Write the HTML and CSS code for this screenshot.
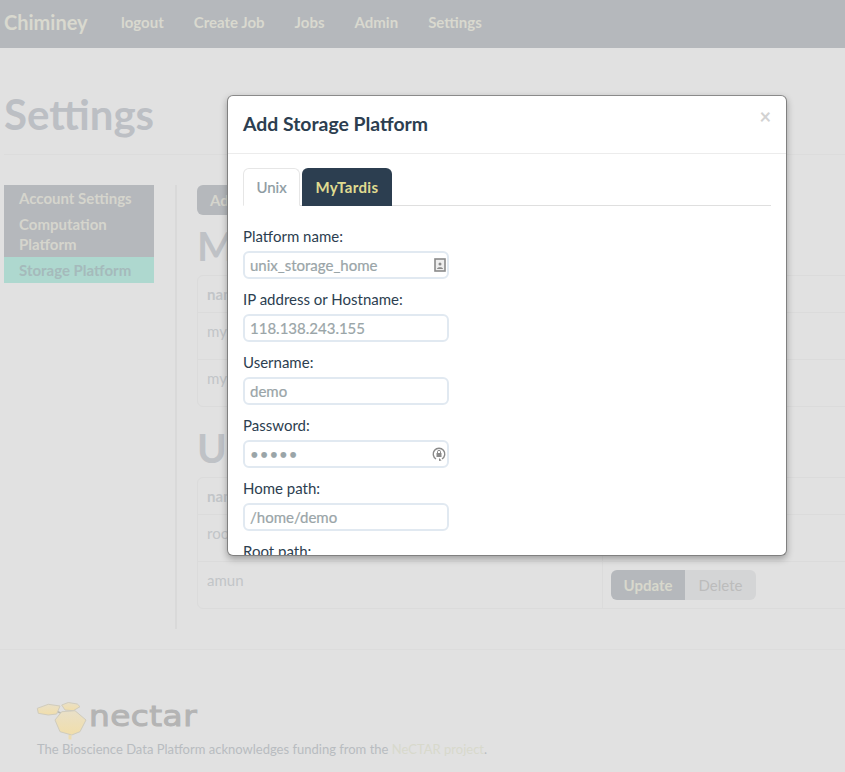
FILE: index.html
```html
<!DOCTYPE html>
<html lang="en">
<head>
    <meta charset="UTF-8">
    <title>Chiminey - Settings</title>
    <link rel="stylesheet" href="styles.css">
</head>
<body>
    <nav class="navbar">
        <a class="brand">Chiminey</a>
        <a class="nav-link">logout</a>
        <a class="nav-link">Create Job</a>
        <a class="nav-link">Jobs</a>
        <a class="nav-link">Admin</a>
        <a class="nav-link">Settings</a>
    </nav>

    <header class="page-header">
        <h1>Settings</h1>
    </header>

    <div class="main">
        <ul class="side-menu">
            <li>Account Settings</li>
            <li>Computation Platform</li>
            <li class="active">Storage Platform</li>
        </ul>

        <div class="content">
            <a class="btn-add">Add Storage Platform</a>

            <h2 class="first-heading">MyTardis</h2>
            <table class="platforms">
                <tr class="head-row"><th class="name-col">name</th><th></th></tr>
                <tr class="body-row"><td class="name-col">mytardis_home</td><td></td></tr>
                <tr class="body-row"><td class="name-col">mytardis_test</td><td></td></tr>
            </table>

            <h2 class="second-heading">Unix</h2>
            <table class="platforms">
                <tr class="head-row"><th class="name-col">name</th><th></th></tr>
                <tr class="body-row"><td class="name-col">root</td><td></td></tr>
                <tr class="body-row">
                    <td class="name-col">amun</td>
                    <td class="actions">
                        <div class="btn-group">
                            <a class="btn-update">Update</a>
                            <a class="btn-delete">Delete</a>
                        </div>
                    </td>
                </tr>
            </table>
        </div>
    </div>

    <footer class="footer">
        <div class="logo">
            <svg class="logo-mark" width="52" height="38" viewBox="0 0 52 38">
                <defs>
                    <linearGradient id="honey" x1="0" y1="0" x2="0" y2="1">
                        <stop offset="0" stop-color="#e9e0c8"/>
                        <stop offset="1" stop-color="#f1deaa"/>
                    </linearGradient>
                </defs>
                <path d="M20 9 L27 12 M35 7 L35 10" stroke="#b9b9b0" stroke-width="1.5"/>
                <path d="M1.3 6.3 L12.3 2.3 L24 4 L20.7 12 L12.3 13 L2.3 11.3 Z" fill="url(#honey)" stroke="#d0ccbd"/>
                <path d="M25.7 3 L32.3 0.5 L41.3 2 L44 4.7 L37.3 8.7 L29 8 Z" fill="url(#honey)" stroke="#d0ccbd"/>
                <path d="M19 18 L25.7 9.7 L39 8.7 L50 18 L44 29.7 L35.7 33 L24 29.7 Z" fill="url(#honey)" stroke="#d0ccbd"/>
                <path d="M34 33 L34 37.5" stroke="#ecdcb0" stroke-width="3"/>
            </svg>
            <span class="logo-word">nectar</span>
        </div>
        <p class="credit">The Bioscience Data Platform acknowledges funding from the <a>NeCTAR project</a>.</p>
    </footer>

    <div class="modal">
        <div class="modal-header">
            <h3>Add Storage Platform</h3>
            <span class="close">&times;</span>
        </div>
        <div class="modal-body">
            <ul class="tabs">
                <li class="tab-current">Unix</li>
                <li class="tab-other">MyTardis</li>
            </ul>

            <label>Platform name:</label>
            <div class="field">
                <span class="value">unix_storage_home</span>
                <svg class="field-icon" width="12" height="14" viewBox="0 0 12 14">
                    <rect x="1" y="1" width="10" height="12" fill="#eee" stroke="#8a8a8a" stroke-width="1.6"/>
                    <circle cx="6" cy="6" r="1.5" fill="#8a8a8a"/>
                    <path d="M3 11 C3 8.5 9 8.5 9 11 Z" fill="#8a8a8a"/>
                </svg>
            </div>

            <label>IP address or Hostname:</label>
            <div class="field"><span class="value">118.138.243.155</span></div>

            <label>Username:</label>
            <div class="field"><span class="value">demo</span></div>

            <label>Password:</label>
            <div class="field">
                <span class="value dots">&bull;&bull;&bull;&bull;&bull;</span>
                <svg class="field-icon" width="14" height="14" viewBox="0 0 14 14">
                    <path d="M4 12 A5.8 5.8 0 1 1 10 12" fill="none" stroke="#8a8a8a" stroke-width="1.4"/>
                    <path d="M7 11 L9.6 13.4 L7 14 Z" fill="#8a8a8a"/>
                    <rect x="4.5" y="6" width="5" height="4" fill="#8a8a8a"/>
                    <path d="M5.5 6 V4.8 A1.5 1.5 0 0 1 8.5 4.8 V6" fill="none" stroke="#8a8a8a"/>
                </svg>
            </div>

            <label>Home path:</label>
            <div class="field"><span class="value">/home/demo</span></div>

            <label>Root path:</label>
            <div class="field"><span class="value">/home/demo</span></div>
        </div>
    </div>
</body>
</html>
```

FILE: styles.css
```css
html, body {
    height: 772px;
    overflow: hidden;
}

body {
    margin: 0;
    background-color: #e1e1e1;
    font-family: 'Lato', sans-serif;
    font-size: 15px;
    color: #bfc2c5;
    position: relative;
}

/* top bar */
.navbar {
    display: flex;
    align-items: center;
    height: 48px;
    box-sizing: border-box;
    padding-bottom: 4px;
    background-color: #b5b8bc;
    color: #d9d9cf;
    font-weight: bold;
}

.brand {
    font-size: 20px;
    margin-left: 4px;
    width: 117px;
}

.nav-link {
    font-size: 15px;
    margin-right: 30px;
}

/* page title */
.page-header {
    height: 106px;
    margin: 0 0 0 4px;
    border-bottom: 1px solid #dcdcdc;
}

.page-header h1 {
    margin: 0;
    padding-top: 41px;
    font-size: 42px;
    line-height: 50px;
    font-weight: bold;
    color: #bcbfc4;
}

.main {
    display: flex;
    margin-top: 30px;
    height: 444px;
}

/* left menu */
.side-menu {
    list-style: none;
    width: 150px;
    height: 98px;
    margin: 0 21px 0 4px;
    padding: 0;
    background-color: #b5b8bc;
    color: #d5d5cd;
    font-size: 15px;
    font-weight: bold;
    line-height: 20px;
}

.side-menu li {
    padding: 3px 15px 3px 15px;
}

.side-menu .active {
    background-color: #aed8cf;
    color: #a5babb;
}

.content {
    flex: 1;
    min-width: 0;
    border-left: 2px solid #d9d9d9;
    padding-left: 20px;
    overflow: hidden;
}

.btn-add {
    display: block;
    width: 180px;
    height: 30px;
    line-height: 30px;
    padding-left: 13px;
    box-sizing: border-box;
    background-color: #b5b8bc;
    border-radius: 6px;
    color: #d5d5cd;
    font-weight: bold;
}

.content h2 {
    margin: 0;
    font-size: 40px;
    line-height: 44px;
    font-weight: bold;
    color: #bfc2c6;
}

.first-heading {
    padding-top: 9px;
    height: 51px;
}

.second-heading {
    padding-top: 19px;
    height: 51px;
}

/* tables */
.platforms {
    width: 800px;
    border-collapse: separate;
    border-spacing: 0;
    border: 1px solid #dbdbdb;
    border-radius: 6px;
    font-size: 15px;
    color: #c2c5c8;
}

.platforms th, .platforms td {
    text-align: left;
    vertical-align: top;
    padding: 8px 9px;
    line-height: 20px;
    border-top: 1px solid #dbdbdb;
}

.platforms tr:first-child th {
    border-top: none;
}

.platforms .name-col {
    width: 386px;
    border-right: 1px solid #dbdbdb;
}

.head-row {
    height: 36px;
}

.body-row {
    height: 47px;
}

.actions {
    padding-left: 8px !important;
}

.btn-group {
    display: flex;
    width: 145px;
    height: 30px;
    line-height: 30px;
    text-align: center;
    border-radius: 6px;
    overflow: hidden;
    font-weight: bold;
}

.btn-update {
    width: 74px;
    background-color: #b5b8bc;
    color: #d8d8cc;
}

.btn-delete {
    flex: 1;
    background-color: #d4d5d6;
    color: #bcbcbc;
    font-weight: normal;
}

/* footer */
.footer {
    margin-top: 20px;
    border-top: 1px solid #dcdcdc;
    padding: 52px 0 0 36px;
}

.logo {
    display: flex;
    align-items: flex-start;
    height: 36px;
}

.logo-word {
    font-family: 'DejaVu Sans', sans-serif;
    font-size: 29px;
    line-height: 29px;
    letter-spacing: 0.4px;
    -webkit-text-stroke: 1px #b4b4b4;
    color: #b4b4b4;
    margin-left: 1px;
    transform: scaleX(1.13);
    transform-origin: left;
}

.credit {
    margin: 1px 0 0 1px;
    font-size: 13px;
    line-height: 20px;
    color: #b8bcc0;
}

.credit a {
    color: #d8d9cc;
}

/* dialog */
.modal {
    position: absolute;
    left: 227px;
    top: 95px;
    width: 558px;
    height: 459px;
    background-color: #fff;
    border: 1px solid #808080;
    border-top-color: #8a8a8a;
    border-radius: 6px;
    box-shadow: 0 3px 7px rgba(0, 0, 0, 0.3);
    overflow: hidden;
    color: #2c3e50;
}

.modal-header {
    position: relative;
    height: 57px;
    border-bottom: 1px solid #ececec;
}

.modal-header h3 {
    margin: 0;
    padding-left: 15px;
    font-size: 19.4px;
    line-height: 55px;
    font-weight: bold;
}

.close {
    position: absolute;
    right: 15px;
    top: 5px;
    font-size: 20px;
    line-height: 30px;
    font-weight: bold;
    color: #d2d2d2;
}

.modal-body {
    padding: 14px 15px 0;
}

.tabs {
    list-style: none;
    display: flex;
    gap: 2px;
    height: 37px;
    margin: 0 0 20px;
    padding: 0;
    border-bottom: 1px solid #dfdfdf;
    font-size: 15px;
    line-height: 38px;
    text-align: center;
}

.tabs li {
    height: 38px;
    box-sizing: border-box;
    border-radius: 6px 6px 0 0;
}

.tab-current {
    width: 57px;
    border: 1px solid #e6e6e6;
    border-bottom: 1px solid #fff;
    color: #8c9aa1;
    line-height: 36px;
    -webkit-text-stroke: 0.2px #8c9aa1;
}

.tab-other {
    width: 90px;
    background-color: #2c3e50;
    color: #e0dc90;
    font-weight: bold;
    letter-spacing: 0.4px;
}

.modal-body label {
    display: block;
    font-size: 15px;
    line-height: 20px;
    margin-bottom: 5px;
}

.field {
    display: flex;
    align-items: center;
    justify-content: space-between;
    width: 206px;
    height: 28px;
    box-sizing: border-box;
    margin-bottom: 10px;
    padding: 0 1px 0 5px;
    border: 2px solid #e1e9f1;
    border-radius: 6px;
    font-size: 15px;
    color: #9aa5a8;
    -webkit-text-stroke: 0.2px #9aa5a8;
}

.dots {
    font-size: 15px;
    letter-spacing: 1px;
}
```
